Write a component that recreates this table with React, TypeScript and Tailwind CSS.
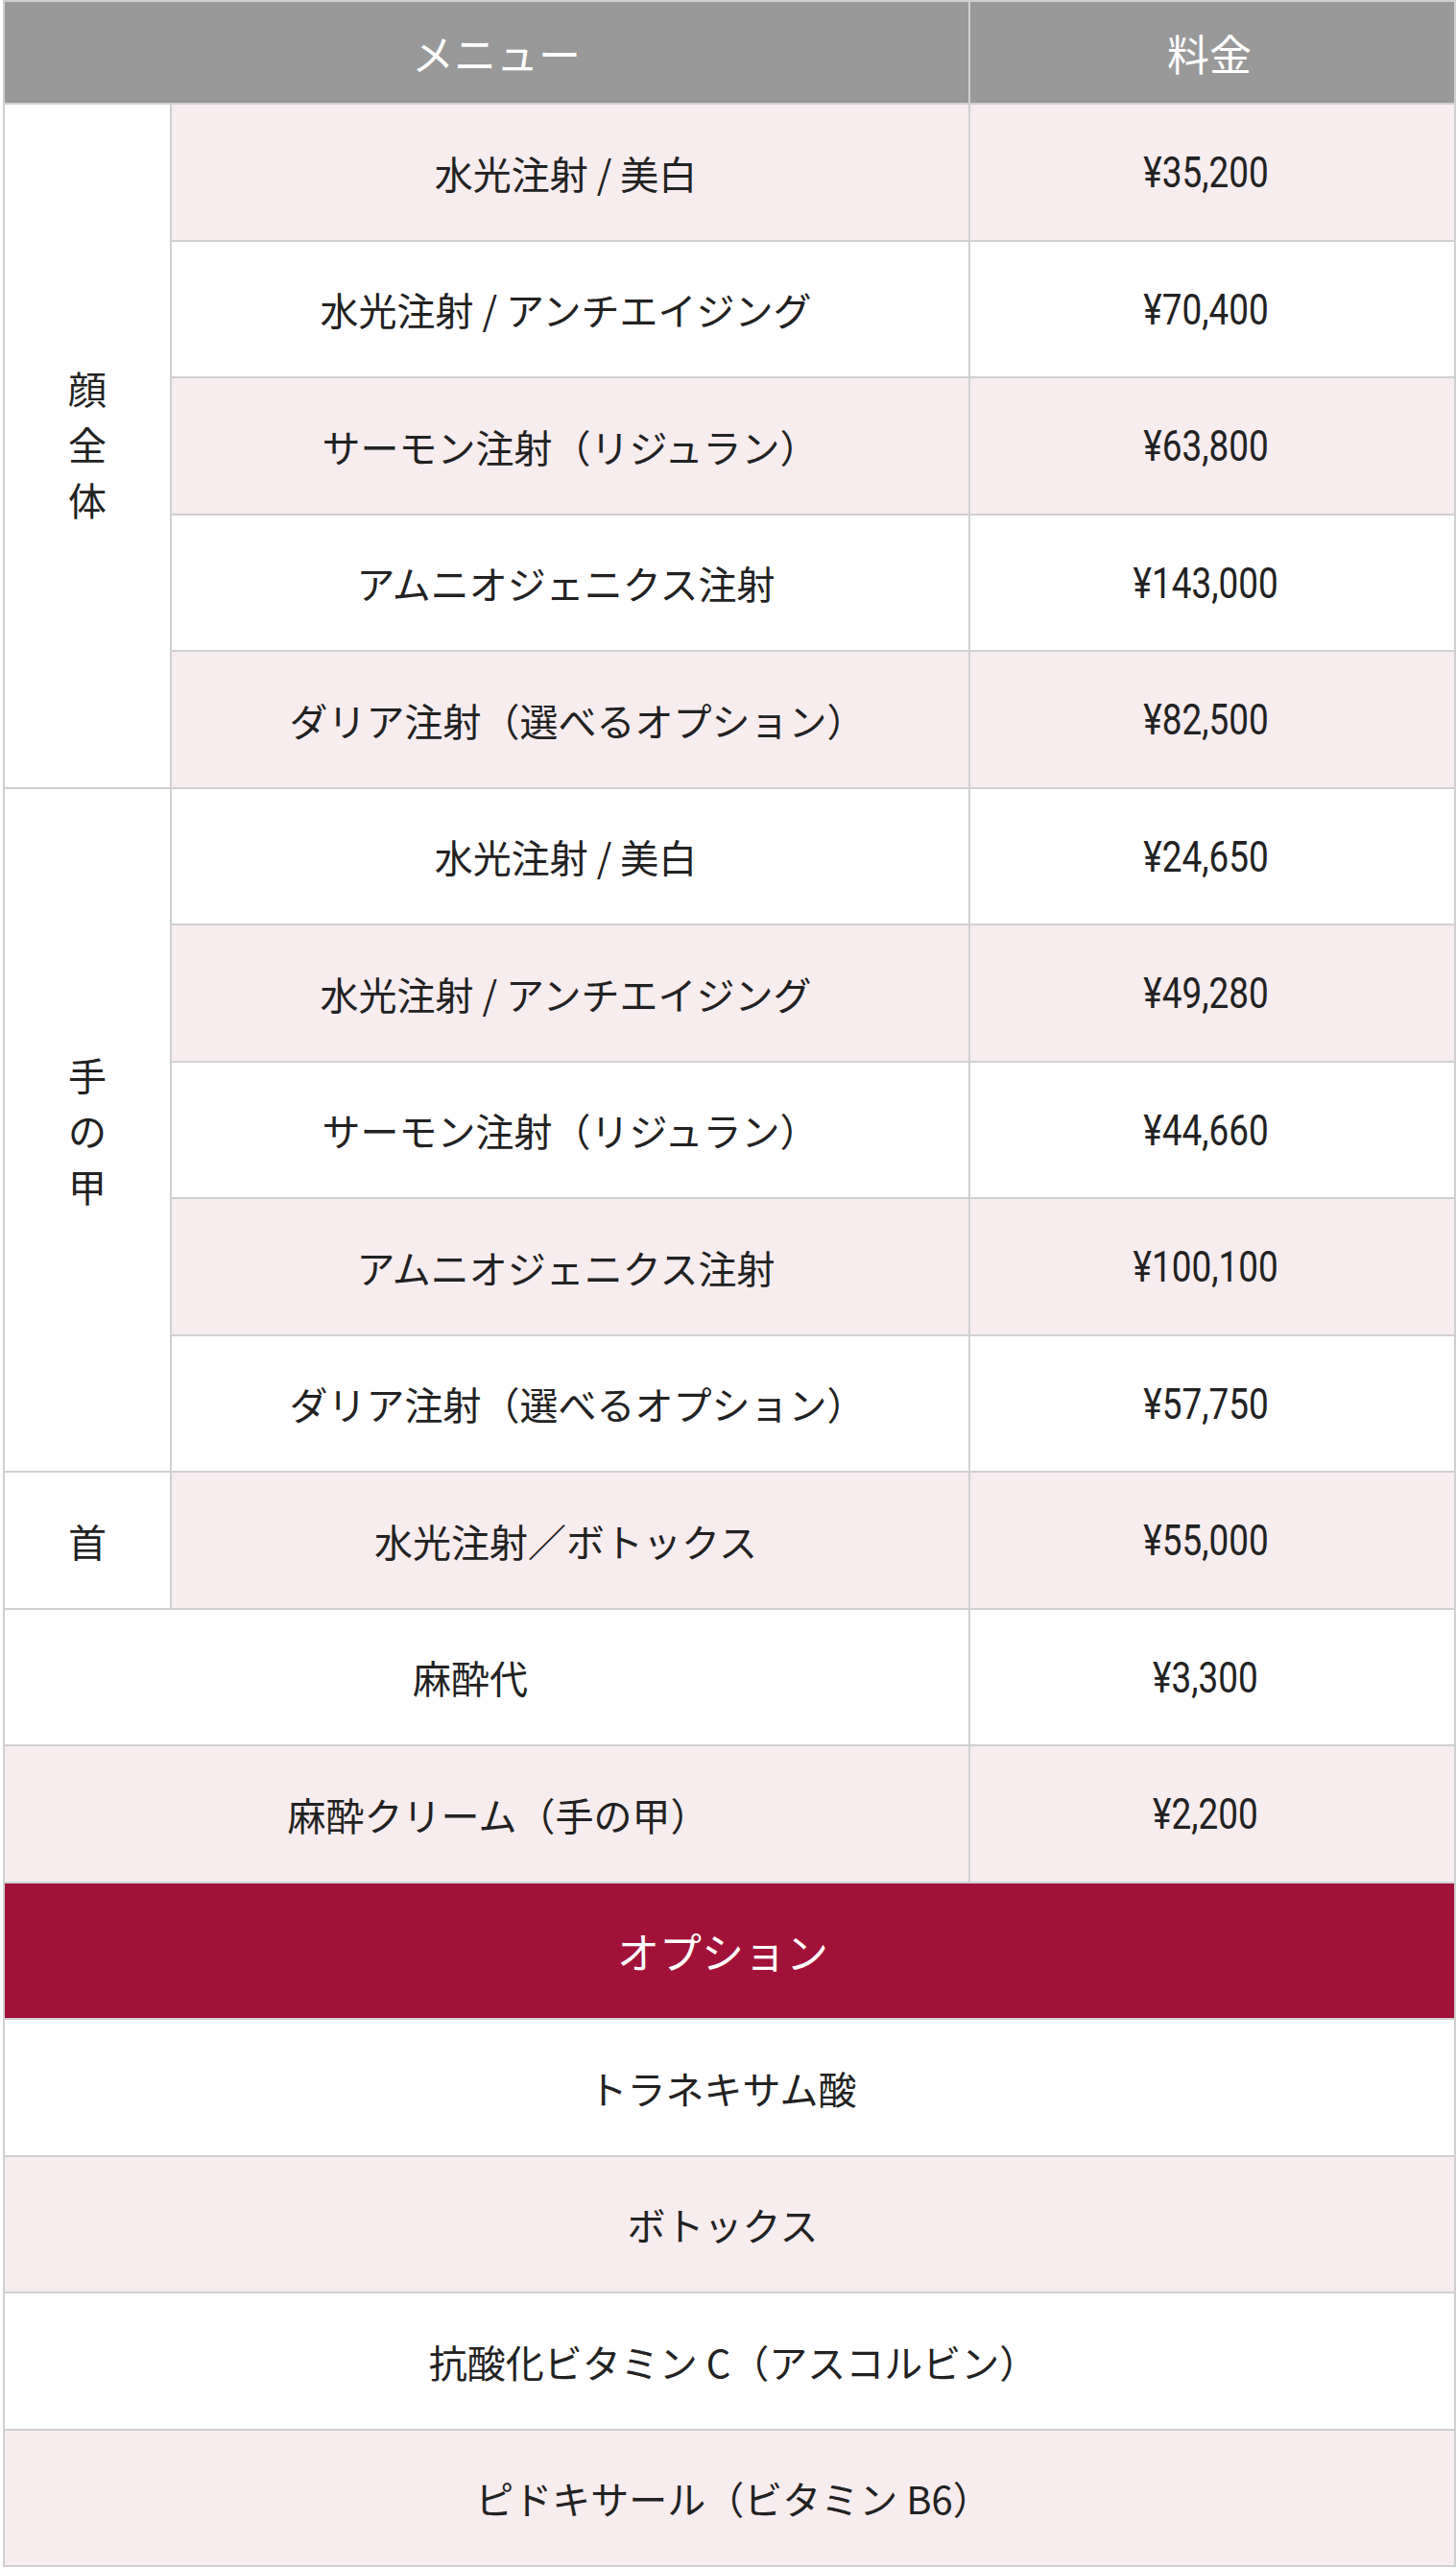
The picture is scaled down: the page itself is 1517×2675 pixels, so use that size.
import React from "react";

const cell =
  "flex items-center justify-center text-center border-r-2 border-b-2 border-[#d0d0d0]";

type Item = { name: string; price: string; pad: string };

const face: Item[] = [
  { name: "水光注射 / 美白", price: "¥35,200", pad: "pr-[9px]" },
  { name: "水光注射 / アンチエイジング", price: "¥70,400", pad: "pr-[9px]" },
  { name: "サーモン注射（リジュラン）", price: "¥63,800", pad: "pl-[0px]" },
  { name: "アムニオジェニクス注射", price: "¥143,000", pad: "pr-[9px]" },
  { name: "ダリア注射（選べるオプション）", price: "¥82,500", pad: "pl-[15px]" },
];

const hand: Item[] = [
  { name: "水光注射 / 美白", price: "¥24,650", pad: "pr-[9px]" },
  { name: "水光注射 / アンチエイジング", price: "¥49,280", pad: "pr-[9px]" },
  { name: "サーモン注射（リジュラン）", price: "¥44,660", pad: "pl-[0px]" },
  { name: "アムニオジェニクス注射", price: "¥100,100", pad: "pr-[9px]" },
  { name: "ダリア注射（選べるオプション）", price: "¥57,750", pad: "pl-[15px]" },
];

const options = [
  { t: "トラネキサム酸", pad: "pr-[14px]" },
  { t: "ボトックス", pad: "pr-[14px]" },
  { t: "抗酸化ビタミン C（アスコルビン）", pad: "pl-[8px]" },
  { t: "ピドキサール（ビタミン B6）", pad: "pl-[8px]" },
];

function Price({ v }: { v: string }) {
  return (
    <span className="inline-block font-['Roboto',sans-serif] font-normal text-[45px] leading-none scale-x-[0.82] text-[#222]">
      {v}
    </span>
  );
}

function Rows({ items, startPink }: { items: Item[]; startPink: boolean }) {
  return (
    <>
      {items.map((it, i) => {
        const pink = (i % 2 === 0) === startPink;
        return (
          <React.Fragment key={i}>
            <div className={`${cell} col-start-2 ${it.pad} ${pink ? "bg-[#f7ecee]" : "bg-white"}`}>
              {it.name}
            </div>
            <div className={`${cell} col-start-3 pr-[14px] ${pink ? "bg-[#f7ecee]" : "bg-white"}`}>
              <Price v={it.price} />
            </div>
          </React.Fragment>
        );
      })}
    </>
  );
}

export default function App() {
  return (
    <div className="bg-white w-[1517px] min-h-[2675px]">
      <div className="ml-[3px] w-[1514px] grid grid-cols-[174px_832px_506px] grid-rows-[107px_repeat(9,143px_142px)] border-l-2 border-t-2 border-[#d0d0d0] font-['Noto_Sans_CJK_JP',sans-serif] font-normal text-[40px] text-[#222] leading-none">
        {/* header */}
        <div className={`${cell} col-span-2 bg-[#999999] text-white text-[44px] pl-5`}>メニュー</div>
        <div className={`${cell} bg-[#999999] text-white text-[44px] pr-[6px]`}>料金</div>

        {/* face */}
        <div className={`${cell} row-span-5 col-start-1 bg-white flex-col gap-[18px] pb-[6px]`}>
          <span>顔</span>
          <span>全</span>
          <span>体</span>
        </div>
        <Rows items={face} startPink={true} />

        {/* hand */}
        <div className={`${cell} row-span-5 col-start-1 bg-white flex-col gap-[18px]`}>
          <span>手</span>
          <span>の</span>
          <span>甲</span>
        </div>
        <Rows items={hand} startPink={false} />

        {/* neck */}
        <div className={`${cell} col-start-1 bg-white`}>首</div>
        <div className={`${cell} col-start-2 pr-[9px] bg-[#f7ecee]`}>水光注射／ボトックス</div>
        <div className={`${cell} col-start-3 pr-[14px] bg-[#f7ecee]`}>
          <Price v="¥55,000" />
        </div>

        {/* anesthesia */}
        <div className={`${cell} col-start-1 col-span-2 pr-[34px] bg-white`}>麻酔代</div>
        <div className={`${cell} col-start-3 pr-[14px] bg-white`}>
          <Price v="¥3,300" />
        </div>
        <div className={`${cell} col-start-1 col-span-2 pl-[24px] bg-[#f7ecee]`}>麻酔クリーム（手の甲）</div>
        <div className={`${cell} col-start-3 pr-[14px] bg-[#f7ecee]`}>
          <Price v="¥2,200" />
        </div>

        {/* options */}
        <div className={`${cell} col-start-1 col-span-3 pr-[14px] bg-[#a21138] text-white text-[44px]`}>
          オプション
        </div>
        {options.map((o, i) => (
          <div
            key={o.t}
            className={`${cell} col-start-1 col-span-3 ${o.pad} ${i % 2 === 0 ? "bg-white" : "bg-[#f7ecee]"}`}
          >
            {o.t}
          </div>
        ))}
      </div>
    </div>
  );
}
